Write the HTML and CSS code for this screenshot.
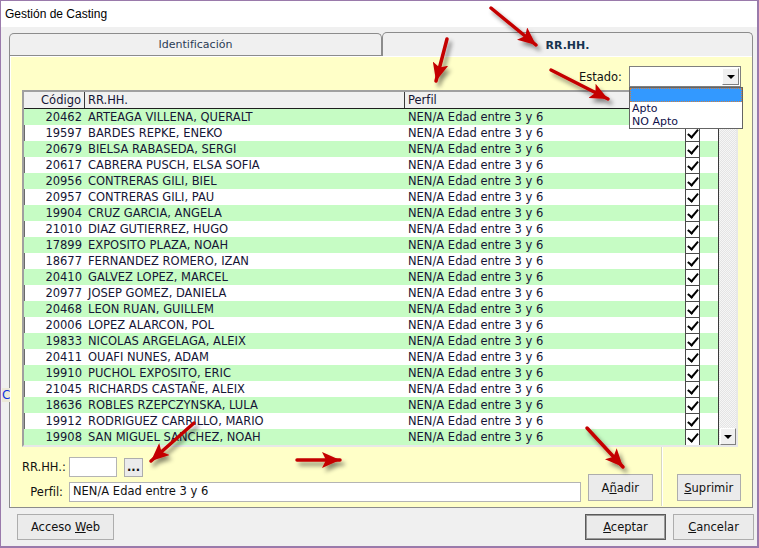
FILE: index.html
```html
<!DOCTYPE html>
<html lang="es">
<head>
  <meta charset="UTF-8" />
  <title>Gestión de Casting</title>
  <link rel="stylesheet" href="styles.css">
</head>
<body>
  <div class="window">
    <div class="titlebar">Gestión de Casting</div>
    <span class="stray">C</span>

    <div class="tabs">
      <div class="tabstrip">
        <div class="tab tab-id">Identificación</div>
        <div class="tab tab-rrhh active">RR.HH.</div>
      </div>
      <div class="panel">
        <div class="estado-row">
          <label>Estado:</label>
          <div class="combo">
            <div class="combo-btn"><span class="tri"></span></div>
            <ul class="combo-list">
              <li class="sel">&nbsp;</li>
              <li>Apto</li>
              <li>NO Apto</li>
            </ul>
          </div>
        </div>

        <div class="grid">
          <div class="grid-body">
            <div class="grid-head">
              <span class="code">Código</span>
              <span class="name">RR.HH.</span>
              <span class="perfil">Perfil</span>
            </div>
            <div class="row"><span class="code">20462</span><span class="name">ARTEAGA VILLENA, QUERALT</span><span class="perfil">NEN/A Edad entre 3 y 6</span><span class="check"></span></div>
            <div class="row"><span class="code">19597</span><span class="name">BARDES REPKE, ENEKO</span><span class="perfil">NEN/A Edad entre 3 y 6</span><span class="check"></span></div>
            <div class="row"><span class="code">20679</span><span class="name">BIELSA RABASEDA, SERGI</span><span class="perfil">NEN/A Edad entre 3 y 6</span><span class="check"></span></div>
            <div class="row"><span class="code">20617</span><span class="name">CABRERA PUSCH, ELSA SOFIA</span><span class="perfil">NEN/A Edad entre 3 y 6</span><span class="check"></span></div>
            <div class="row"><span class="code">20956</span><span class="name">CONTRERAS GILI, BIEL</span><span class="perfil">NEN/A Edad entre 3 y 6</span><span class="check"></span></div>
            <div class="row"><span class="code">20957</span><span class="name">CONTRERAS GILI, PAU</span><span class="perfil">NEN/A Edad entre 3 y 6</span><span class="check"></span></div>
            <div class="row"><span class="code">19904</span><span class="name">CRUZ GARCIA, ANGELA</span><span class="perfil">NEN/A Edad entre 3 y 6</span><span class="check"></span></div>
            <div class="row"><span class="code">21010</span><span class="name">DIAZ GUTIERREZ, HUGO</span><span class="perfil">NEN/A Edad entre 3 y 6</span><span class="check"></span></div>
            <div class="row"><span class="code">17899</span><span class="name">EXPOSITO PLAZA, NOAH</span><span class="perfil">NEN/A Edad entre 3 y 6</span><span class="check"></span></div>
            <div class="row"><span class="code">18677</span><span class="name">FERNANDEZ ROMERO, IZAN</span><span class="perfil">NEN/A Edad entre 3 y 6</span><span class="check"></span></div>
            <div class="row"><span class="code">20410</span><span class="name">GALVEZ LOPEZ, MARCEL</span><span class="perfil">NEN/A Edad entre 3 y 6</span><span class="check"></span></div>
            <div class="row"><span class="code">20977</span><span class="name">JOSEP GOMEZ, DANIELA</span><span class="perfil">NEN/A Edad entre 3 y 6</span><span class="check"></span></div>
            <div class="row"><span class="code">20468</span><span class="name">LEON RUAN, GUILLEM</span><span class="perfil">NEN/A Edad entre 3 y 6</span><span class="check"></span></div>
            <div class="row"><span class="code">20006</span><span class="name">LOPEZ ALARCON, POL</span><span class="perfil">NEN/A Edad entre 3 y 6</span><span class="check"></span></div>
            <div class="row"><span class="code">19833</span><span class="name">NICOLAS ARGELAGA, ALEIX</span><span class="perfil">NEN/A Edad entre 3 y 6</span><span class="check"></span></div>
            <div class="row"><span class="code">20411</span><span class="name">OUAFI NUNES, ADAM</span><span class="perfil">NEN/A Edad entre 3 y 6</span><span class="check"></span></div>
            <div class="row"><span class="code">19910</span><span class="name">PUCHOL EXPOSITO, ERIC</span><span class="perfil">NEN/A Edad entre 3 y 6</span><span class="check"></span></div>
            <div class="row"><span class="code">21045</span><span class="name">RICHARDS CASTAÑE, ALEIX</span><span class="perfil">NEN/A Edad entre 3 y 6</span><span class="check"></span></div>
            <div class="row"><span class="code">18636</span><span class="name">ROBLES RZEPCZYNSKA, LULA</span><span class="perfil">NEN/A Edad entre 3 y 6</span><span class="check"></span></div>
            <div class="row"><span class="code">19912</span><span class="name">RODRIGUEZ CARRILLO, MARIO</span><span class="perfil">NEN/A Edad entre 3 y 6</span><span class="check"></span></div>
            <div class="row"><span class="code">19908</span><span class="name">SAN MIGUEL SANCHEZ, NOAH</span><span class="perfil">NEN/A Edad entre 3 y 6</span><span class="check"></span></div>
          </div>
          <div class="vscroll">
            <div class="sb-btn"><span class="tri up"></span></div>
            <div class="sb-btn"><span class="tri"></span></div>
          </div>
        </div>

        <div class="bottom">
          <div class="fields">
            <div class="field">
              <label>RR.HH.:</label>
              <div class="input small"></div>
              <button class="btn dots">...</button>
            </div>
            <div class="field">
              <label>Perfil:</label>
              <div class="input wide">NEN/A Edad entre 3 y 6</div>
            </div>
          </div>
          <button class="btn action">A<u>ñ</u>adir</button>
          <div class="sep"></div>
          <button class="btn action"><u>S</u>uprimir</button>
        </div>
      </div>
    </div>

    <div class="footer">
      <button class="btn big web">Acceso <u>W</u>eb</button>
      <div class="spacer"></div>
      <button class="btn big default"><u>A</u>ceptar</button>
      <button class="btn big"><u>C</u>ancelar</button>
    </div>

    <svg class="arrows" width="759" height="548" viewBox="0 0 759 548">
      <defs>
        <marker id="head" markerUnits="userSpaceOnUse" markerWidth="20" markerHeight="16" refX="18" refY="8" orient="auto">
          <path d="M0,0 L18,8 L0,16 L4,8 z" fill="#c40000" />
        </marker>
        <filter id="shadow" x="-30%" y="-30%" width="160%" height="160%">
          <feDropShadow dx="3" dy="4" stdDeviation="2" flood-color="#000" flood-opacity="0.45" />
        </filter>
      </defs>
      <g stroke="#c40000" stroke-width="3.5" stroke-linecap="round" marker-end="url(#head)" filter="url(#shadow)">
        <line x1="491" y1="8" x2="536" y2="45" />
        <line x1="447" y1="39" x2="436" y2="81" />
        <line x1="551" y1="70" x2="608" y2="99" />
        <line x1="194" y1="423" x2="151" y2="461" />
        <line x1="297" y1="460" x2="340" y2="460" />
        <line x1="587" y1="428" x2="623" y2="467" />
      </g>
    </svg>
  </div>
</body>
</html>
```

FILE: styles.css
```css
* {
  box-sizing: border-box;
}
body {
  margin: 0;
  font-family: "DejaVu Sans", Verdana, sans-serif;
  font-size: 11.5px;
  color: #111;
  background: #f0f0f0;
}
.window {
  position: relative;
  width: 759px;
  height: 548px;
  border: solid #9a7aab;
  border-width: 1px 2px 2px 1px;
  background: #f0f0f0;
  overflow: hidden;
}
.titlebar {
  height: 26px;
  background: #fff;
  padding: 6px 0 0 4px;
  font-family: "Liberation Sans", Arial, sans-serif;
  font-size: 12px;
  color: #000;
}
.stray {
  position: absolute;
  left: 1px;
  top: 387px;
  width: 8px;
  height: 14px;
  background: #ece9d8;
  color: #1030e0;
  font-size: 12px;
  line-height: 14px;
  overflow: hidden;
}

/* tab control */
.tabs {
  margin: 6px 0 0 8px;
  width: 744px;
}
.tabstrip {
  display: flex;
  height: 22px;
}
.tab {
  border: 1px solid #8c8c8c;
  border-bottom: none;
  border-radius: 5px 5px 0 0;
  background: #f0f0f0;
  text-align: center;
  font-size: 11px;
  line-height: 21px;
  color: #2b3c55;
}
.tab-id {
  width: 373px;
}
.tab-rrhh {
  width: 371px;
  font-weight: bold;
  color: #173450;
}
.tab.active {
  position: relative;
  z-index: 1;
  height: 24px;
  margin-top: -1px;
  line-height: 25px;
}
.panel {
  height: 453px;
  border: 1px solid #8c8c8c;
  background: #ffffc8;
  box-shadow: inset 1px 1px 0 #fff;
  padding: 10px 11px 0 12px;
}

/* estado combo */
.estado-row {
  display: flex;
  justify-content: flex-end;
  align-items: center;
  gap: 7px;
  height: 21px;
}
.combo {
  position: relative;
  width: 112px;
  height: 21px;
  background: #fff;
  border: 1px solid #7f7f7f;
}
.combo-btn {
  position: absolute;
  right: 1px;
  top: 1px;
  width: 17px;
  height: 17px;
  background: #f0f0f0;
  border: 1px solid;
  border-color: #fff #808080 #808080 #fff;
  display: flex;
  align-items: center;
  justify-content: center;
}
.tri {
  width: 0;
  height: 0;
  border-left: 4px solid transparent;
  border-right: 4px solid transparent;
  border-top: 4px solid #000;
}
.tri.up {
  border-top: none;
  border-bottom: 4px solid #000;
}
.combo-list {
  position: absolute;
  z-index: 5;
  left: -1px;
  top: 20px;
  width: 114px;
  margin: 0;
  padding: 0;
  list-style: none;
  background: #fff;
  border: 1px solid #646464;
  color: #10104a;
  font-size: 11px;
}
.combo-list li {
  height: 13px;
  line-height: 13px;
  padding-left: 2px;
}
.combo-list li.sel {
  height: 14px;
  background: #3399ff;
  border: 1px dotted #d08040;
}

/* grid */
.grid {
  display: flex;
  margin: 3px 3px 0 0;
  height: 357px;
  border: 2px solid;
  border-color: #a0a0a0 #e8e8e8 #e8e8e8 #a0a0a0;
  box-shadow: inset 1px 1px 0 #6a6a6a;
  background: #fff;
}
.grid-body {
  width: 694px;
}
.grid-head,
.row {
  display: grid;
  grid-template-columns: 61px 320px 280px 15px 18px;
  height: 16px;
  line-height: 17px;
  color: #151535;
}
.grid-head {
  height: 17px;
  line-height: 16px;
  background: #f0f0f0;
  border-bottom: 1px solid #1e1e1e;
}
.grid-head .code,
.grid-head .name {
  border-right: 1px solid #3a3a3a;
}
.code {
  text-align: right;
  padding-right: 3px;
}
.name,
.perfil {
  padding-left: 3px;
  white-space: nowrap;
}
.row:nth-child(even) {
  background: #c6fcc4;
}
.check {
  position: relative;
  width: 15px;
  height: 16px;
  background: #fff;
  border: 1px solid #4a4a4a;
  border-width: 1px 1px 0 1px;
}
.check::after {
  content: "";
  position: absolute;
  left: 4px;
  top: 1px;
  width: 4px;
  height: 9px;
  border: solid #000;
  border-width: 0 2px 2px 0;
  transform: rotate(40deg);
}
.vscroll {
  flex: 1;
  display: flex;
  flex-direction: column;
  justify-content: space-between;
  border-left: 1px solid #3a3a3a;
  background: repeating-conic-gradient(#f6f6f6 0 25%, #e4e4e4 0 50%) 0 0 / 2px 2px;
  padding-left: 1px;
}
.sb-btn {
  height: 17px;
  background: #f0f0f0;
  border: 1px solid;
  border-color: #fff #808080 #808080 #fff;
  display: flex;
  align-items: center;
  justify-content: center;
}

/* bottom form */
.bottom {
  display: flex;
  height: 59px;
}
.fields {
  display: flex;
  flex-direction: column;
  gap: 5px;
  padding-top: 10px;
}
.field {
  display: flex;
  align-items: center;
  gap: 6px;
  height: 20px;
}
.field label {
  width: 41px;
  text-align: right;
  color: #111;
  white-space: nowrap;
}
.input {
  height: 20px;
  background: #fff;
  border: 1px solid #b4b4b4;
  padding: 1px 0 0 3px;
  color: #111;
}
.input.small {
  width: 48px;
}
.input.wide {
  width: 512px;
}
.btn {
  font-family: inherit;
  font-size: 11.5px;
  color: #111;
  background: #ebebeb;
  border: 1px solid #adadad;
  padding: 0;
}
.btn u {
  text-decoration-thickness: 1px;
}
.dots {
  width: 19px;
  height: 19px;
  margin-left: 1px;
  font-weight: bold;
  line-height: 12px;
}
.action {
  width: 65px;
  height: 27px;
  margin-top: 27px;
}
.bottom > .action:first-of-type {
  margin-left: 7px;
}
.sep {
  width: 2px;
  margin: 0 14px 0 8px;
  border-left: 1px solid #d8d8c0;
  border-right: 1px solid #fff;
}

/* footer buttons */
.footer {
  display: flex;
  gap: 7px;
  margin: 6px 3px 0 16px;
}
.big {
  width: 81px;
  height: 26px;
}
.web {
  width: 97px;
}
.default {
  border-color: #5a5a5a;
  box-shadow: inset 0 0 0 1px #9a9a9a;
}
.spacer {
  flex: 1;
}

.arrows {
  position: absolute;
  left: -1px;
  top: -1px;
  pointer-events: none;
  z-index: 10;
}
```
